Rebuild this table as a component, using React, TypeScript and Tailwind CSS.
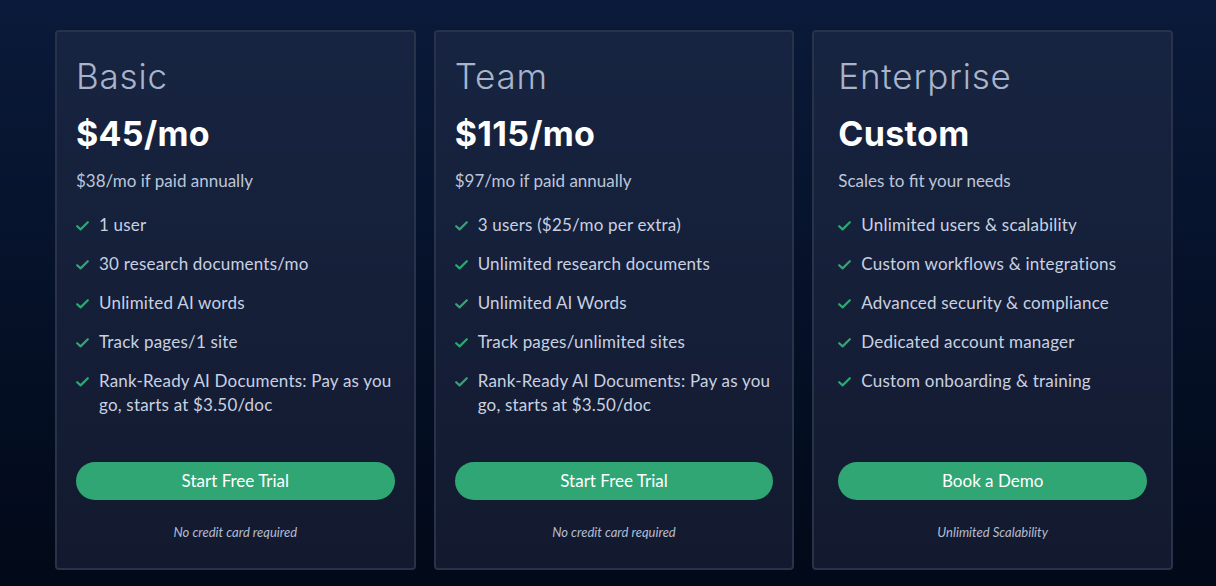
type Plan = {
  name: string;
  price: string;
  note: string;
  features: string[];
  cta: string;
  footnote: string;
  wide?: boolean;
};

const plans: Plan[] = [
  {
    name: 'Basic',
    price: '$45/mo',
    note: '$38/mo if paid annually',
    features: [
      '1 user',
      '30 research documents/mo',
      'Unlimited AI words',
      'Track pages/1 site',
      'Rank-Ready AI Documents: Pay as you go, starts at $3.50/doc',
    ],
    cta: 'Start Free Trial',
    footnote: 'No credit card required',
  },
  {
    name: 'Team',
    price: '$115/mo',
    note: '$97/mo if paid annually',
    features: [
      '3 users ($25/mo per extra)',
      'Unlimited research documents',
      'Unlimited AI Words',
      'Track pages/unlimited sites',
      'Rank-Ready AI Documents: Pay as you go, starts at $3.50/doc',
    ],
    cta: 'Start Free Trial',
    footnote: 'No credit card required',
  },
  {
    name: 'Enterprise',
    price: 'Custom',
    note: 'Scales to fit your needs',
    features: [
      'Unlimited users & scalability',
      'Custom workflows & integrations',
      'Advanced security & compliance',
      'Dedicated account manager',
      'Custom onboarding & training',
    ],
    cta: 'Book a Demo',
    footnote: 'Unlimited Scalability',
    wide: true,
  },
];

function Check() {
  return (
    <svg width="13" height="10" viewBox="0 0 13 10" fill="none" className="mt-[8px] shrink-0">
      <path d="M1.2 5.2 L4.6 8.4 L11.8 1.2" stroke="#2fa674" strokeWidth="2.2" strokeLinecap="round" strokeLinejoin="round" />
    </svg>
  );
}

function PlanCard({ plan }: { plan: Plan }) {
  return (
    <div
      className={`flex h-[540px] flex-col rounded-[4px] border-2 border-[#283249] bg-gradient-to-b from-[#172441] to-[#131a2f] pt-[24px] pb-[27px] ${
        plan.wide ? 'pl-[24px] pr-[24px]' : 'pl-[19px] pr-[19px]'
      }`}
    >
      <h2 className="font-['Inter',sans-serif] text-[35px] leading-[40px] font-light tracking-[0.8px] text-[#a9b3ca]">
        {plan.name}
      </h2>
      <p className="mt-[18px] font-['Inter',sans-serif] text-[34px] leading-[40px] font-bold tracking-[0.3px] text-white">
        {plan.price}
      </p>
      <p className="mt-[15px] font-['Lato',sans-serif] text-[17px] leading-[24px] text-[#bcc6da]">{plan.note}</p>
      <ul className="mt-[20px] flex flex-col gap-[15px]">
        {plan.features.map((f) => (
          <li
            key={f}
            className="flex gap-[10px] font-['Lato',sans-serif] text-[17px] leading-[24px] tracking-[0.2px] text-[#c9d1e1]"
          >
            <Check />
            <span>{f}</span>
          </li>
        ))}
      </ul>
      <div className="mt-auto">
        <button className="h-[38px] w-full rounded-full bg-[#2fa674] font-['Lato',sans-serif] text-[17px] text-white">
          {plan.cta}
        </button>
        <p className="mt-[23px] text-center font-['Lato',sans-serif] text-[13px] leading-[18px] italic text-[#b4bdd1]">
          {plan.footnote}
        </p>
      </div>
    </div>
  );
}

export default function App() {
  return (
    <div className="min-h-[586px] bg-gradient-to-b from-[#0b1a3a] to-[#020918] pt-[30px] pl-[55px]">
      <div className="grid w-[1118px] grid-cols-3 gap-[18px]">
        {plans.map((p) => (
          <PlanCard key={p.name} plan={p} />
        ))}
      </div>
    </div>
  );
}
